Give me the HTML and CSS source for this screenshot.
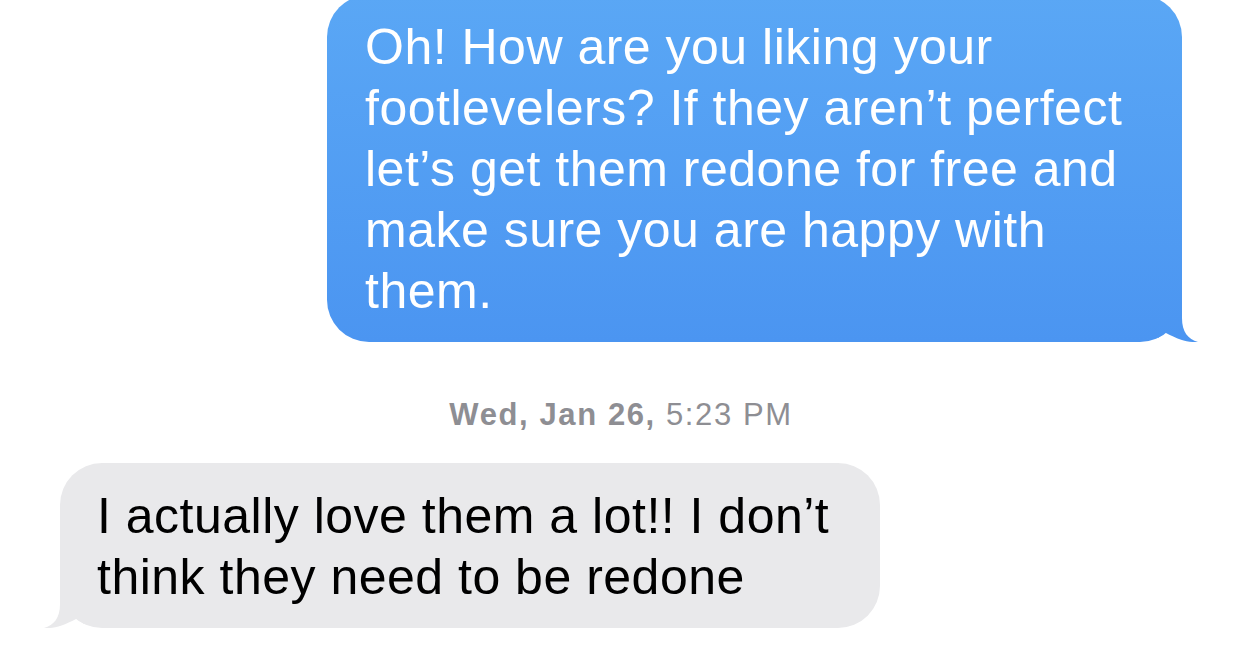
FILE: index.html
```html
<!DOCTYPE html>
<html>
<head>
<meta charset="utf-8">
<link rel="stylesheet" href="styles.css">
</head>
<body>
<div class="thread">
  <div class="bubble sent">
    <p class="text">Oh! How are you liking your<br>footlevelers? If they aren’t perfect<br>let’s get them redone for free and<br>make sure you are happy with<br>them.</p>
    <svg class="tail tail-sent" viewBox="0 0 40 44" width="40" height="44">
      <defs>
        <linearGradient id="blueGrad" gradientUnits="userSpaceOnUse" x1="0" y1="-303" x2="0" y2="44">
          <stop offset="0" stop-color="#5aa7f5"/>
          <stop offset="1" stop-color="#4b95f1"/>
        </linearGradient>
      </defs>
      <path fill="url(#blueGrad)" d="M24,0 L24,20 C24,34 30,41 40,44 C31,44.6 22,42.5 7,34.5 C5,36.5 3,38 0,40 L0,0 Z"/>
    </svg>
  </div>
  <div class="stamp"><span class="day">Wed, Jan 26,</span> 5:23 PM</div>
  <div class="bubble received">
    <p class="text">I actually love them a lot!! I don’t<br>think they need to be redone</p>
    <svg class="tail tail-recv" viewBox="0 0 40 44" width="40" height="44"><path d="M24,0 L24,20 C24,34 30,41 40,44 C31,44.6 22,42.5 7,34.5 C5,36.5 3,38 0,40 L0,0 Z"/></svg>
  </div>
</div>
</body>
</html>
```
FILE: styles.css
```css
html, body {
  margin: 0;
  padding: 0;
  background: #ffffff;
}
body {
  width: 1242px;
  height: 647px;
  overflow: hidden;
  font-family: "Liberation Sans", Arial, sans-serif;
}
.thread {
  display: flex;
  flex-direction: column;
}
.bubble {
  position: relative;
  box-sizing: border-box;
  border-radius: 42px;
}
.text {
  position: relative;
  z-index: 1;
  margin: 0;
  font-size: 50px;
  line-height: 61px;
  letter-spacing: 0.5px;
}
.sent {
  align-self: flex-end;
  margin-top: -5px;
  margin-right: 60px;
  width: 855px;
  height: 347px;
  padding: 22px 10px 0 38px;
  background: linear-gradient(180deg, #5aa7f5 0%, #4b95f1 100%);
  color: #ffffff;
}
.tail {
  position: absolute;
  bottom: 0;
  display: block;
}
.tail-sent {
  right: -16px;
}
.stamp {
  margin-top: 55px;
  text-align: center;
  font-size: 31px;
  line-height: 36px;
  letter-spacing: 1.6px;
  color: #8e8e93;
}
.day {
  font-weight: bold;
}
.received {
  align-self: flex-start;
  margin-top: 30px;
  margin-left: 60px;
  width: 820px;
  height: 165px;
  padding: 23px 10px 0 37px;
  background: #e9e9eb;
  color: #000000;
}
.tail-recv {
  left: -16px;
  transform: scaleX(-1);
  fill: #e9e9eb;
}
```
